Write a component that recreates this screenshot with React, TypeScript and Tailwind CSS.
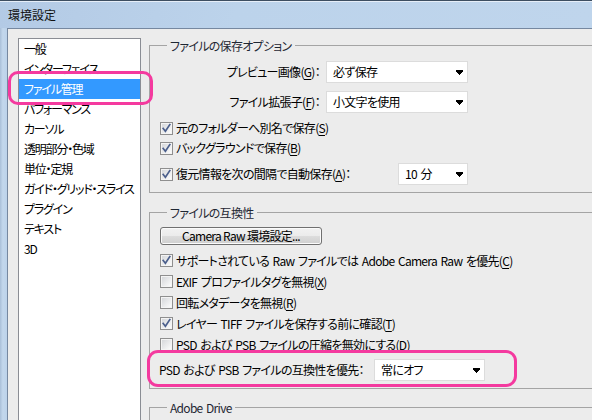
import React from "react";

const FONT =
  "font-['Noto_Sans_CJK_JP','Noto_Sans',sans-serif] [font-feature-settings:'palt'] tracking-[-0.7px] [word-spacing:1.5px]";

function Arrow() {
  return (
    <svg width="7" height="5" viewBox="0 0 7 5" className="block">
      <path d="M0 0H7V2H6V3H5V4H4V5H3V4H2V3H1V2H0Z" fill="#000" />
    </svg>
  );
}

function Select({ text, className }: { text: string; className: string }) {
  return (
    <div
      className={`flex h-[22px] shrink-0 items-center justify-between border border-[#dcdcdc] bg-white pl-[6px] pr-[4px] ${className}`}
    >
      <span className="leading-[16px]">{text}</span>
      <Arrow />
    </div>
  );
}

function Box({ checked }: { checked: boolean }) {
  return (
    <svg width="13" height="13" viewBox="0 0 13 13" className="block shrink-0">
      <defs>
        <linearGradient id="cbg" x1="0" y1="0" x2="1" y2="1">
          <stop offset="0" stopColor="#d6d8db" />
          <stop offset="1" stopColor="#fbfbfb" />
        </linearGradient>
      </defs>
      <rect x="0.5" y="0.5" width="12" height="12" fill="#f4f4f4" stroke="#8f8f8f" />
      <rect x="2" y="2" width="9" height="9" fill="url(#cbg)" />
      {checked && (
        <path
          d="M3.2 6.4 L5.4 9.3 L9.8 2.6"
          fill="none"
          stroke="#4b5f8c"
          strokeWidth="1.7"
          strokeLinecap="square"
        />
      )}
    </svg>
  );
}

function Mn({ children }: { children: React.ReactNode }) {
  return <span className="underline underline-offset-[2px]">{children}</span>;
}

function Check({
  checked,
  children,
  className = "",
}: {
  checked: boolean;
  children: React.ReactNode;
  className?: string;
}) {
  return (
    <div className={`flex items-center gap-[3px] ${className}`}>
      <Box checked={checked} />
      <span className="whitespace-nowrap leading-[16px]">{children}</span>
    </div>
  );
}

function Group({
  title,
  className = "",
  children,
}: {
  title: string;
  className?: string;
  children: React.ReactNode;
}) {
  return (
    <fieldset className={`w-[460px] shrink-0 border border-[#a4a4a4] ${className}`}>
      <legend className="ml-[17px] px-[3px] leading-[17px] text-[#1f2733]">{title}</legend>
      {children}
    </fieldset>
  );
}

const items = [
  "一般",
  "インターフェイス",
  "ファイル管理",
  "パフォーマンス",
  "カーソル",
  "透明部分・色域",
  "単位・定規",
  "ガイド・グリッド・スライス",
  "プラグイン",
  "テキスト",
  "3D",
];

export default function App() {
  return (
    <div
      className={`relative h-[420px] w-[592px] overflow-hidden bg-[#ececec] text-[12px] text-black ${FONT}`}
    >
      {/* title bar */}
      <div className="flex h-[28px] items-center border-t border-[#3d4e61] bg-[linear-gradient(100deg,#b3cae5,#bcd3eb_40%,#bfd5ec)] pl-[8px] shadow-[inset_0_1px_0_#e6eef8]">
        <span className="text-[12px] leading-[16px] tracking-[0px] text-[#111]">環境設定</span>
      </div>

      <div className="flex h-[392px] w-[640px]">
        {/* left frame */}
        <div className="w-[7px] shrink-0 bg-[linear-gradient(90deg,#a9bfd8,#c3d7ec_40%,#bcd2ea)]" />

        {/* client */}
        <div className="flex flex-1 border-l border-t border-[#7688a0]">
          {/* category list */}
          <div className="ml-[10px] mt-[9px] h-[400px] w-[123px] shrink-0 overflow-hidden border border-[#8a8d94] bg-white">
            {items.map((t) => {
              const sel = t === "ファイル管理";
              return (
                <div
                  key={t}
                  className={`h-[20px] whitespace-nowrap pl-[5px] leading-[20px] tracking-[-1.2px] ${
                    sel ? "bg-[#3399ff] text-white" : "text-black"
                  }`}
                >
                  {t}
                </div>
              );
            })}
          </div>

          {/* right panel */}
          <div className="ml-[8px] flex shrink-0 flex-col">
            <Group title="ファイルの保存オプション" className="mt-[8px] pb-[7px]">
              <div className="mt-[7px] flex h-[22px] items-center">
                <div className="w-[170px] text-right leading-[16px]">
                  プレビュー画像(<Mn>G</Mn>)：
                </div>
                <Select text="必ず保存" className="ml-[6px] w-[142px]" />
              </div>
              <div className="mt-[8px] flex h-[22px] items-center">
                <div className="w-[170px] text-right leading-[16px]">
                  ファイル拡張子(<Mn>F</Mn>)：
                </div>
                <Select text="小文字を使用" className="ml-[6px] w-[142px]" />
              </div>
              <Check checked className="mt-[5px] h-[20px] pl-[10px]">
                元のフォルダーへ別名で保存(<Mn>S</Mn>)
              </Check>
              <Check checked className="h-[20px] pl-[10px]">
                バックグラウンドで保存(<Mn>B</Mn>)
              </Check>
              <div className="mt-[5px] flex h-[22px] w-[318px] items-center">
                <Check checked className="pl-[10px]">
                  復元情報を次の間隔で自動保存(<Mn>A</Mn>)：
                </Check>
                <Select text="10 分" className="ml-auto w-[70px]" />
              </div>
            </Group>

            <Group title="ファイルの互換性" className="mt-[11px] pb-[7px]">
              <button className="ml-[10px] mt-[6px] flex h-[18px] w-[162px] items-center justify-center rounded-[3px] border border-[#707070] bg-[linear-gradient(#f2f2f2,#ebebeb_50%,#dddddd_50%,#cfcfcf)] leading-[14px] shadow-[inset_0_0_0_1px_#fbfbfb]">
                Camera Raw 環境設定...
              </button>
              <Check checked className="mt-[5px] h-[21px] pl-[10px]">
                サポートされている Raw ファイルでは Adobe Camera Raw を優先(<Mn>C</Mn>)
              </Check>
              <Check checked={false} className="h-[21px] pl-[10px]">
                EXIF プロファイルタグを無視(<Mn>X</Mn>)
              </Check>
              <Check checked={false} className="h-[21px] pl-[10px]">
                回転メタデータを無視(<Mn>R</Mn>)
              </Check>
              <Check checked className="h-[21px] pl-[10px]">
                レイヤー TIFF ファイルを保存する前に確認(<Mn>T</Mn>)
              </Check>
              <Check checked={false} className="h-[21px] pl-[10px]">
                PSD および PSB ファイルの圧縮を無効にする(<Mn>D</Mn>)
              </Check>
              <div className="mt-[4px] flex h-[22px] items-center pl-[9px]">
                <div className="w-[215px] whitespace-nowrap leading-[16px]">
                  PSD および PSB ファイルの互換性を優先：
                </div>
                <Select text="常にオフ" className="w-[111px]" />
              </div>
            </Group>

            <Group title="Adobe Drive" className="mt-[10px]">
              <div className="h-[40px]" />
            </Group>
          </div>
        </div>
      </div>

      {/* highlight annotations */}
      <div className="pointer-events-none absolute left-[8px] top-[71px] h-[34px] w-[145px] rounded-[10px] border-[3px] border-[#f43a9f]" />
      <div className="pointer-events-none absolute left-[147px] top-[350px] h-[37px] w-[370px] rounded-[11px] border-[3px] border-[#f43a9f]" />
    </div>
  );
}
